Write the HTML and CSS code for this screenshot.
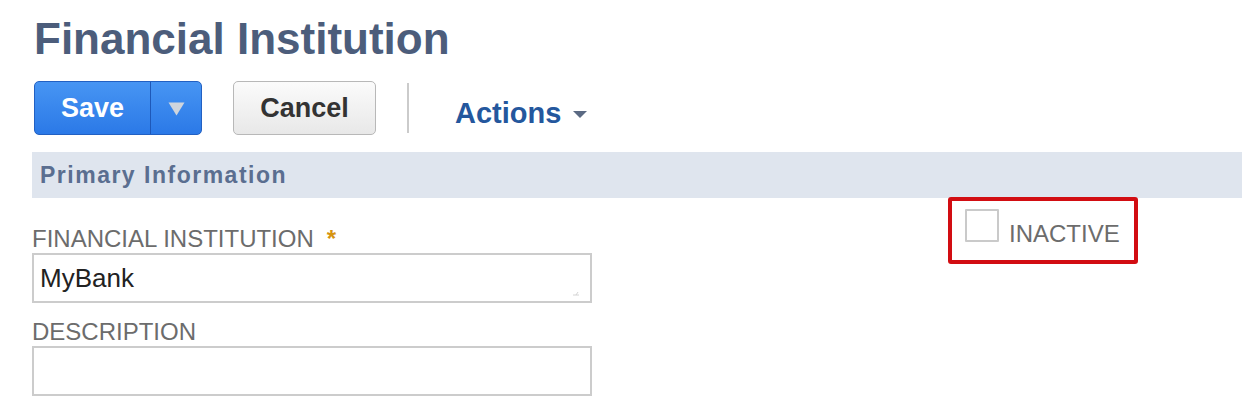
FILE: index.html
```html
<!DOCTYPE html>
<html lang="en">
<head>
<meta charset="utf-8">
<title>Financial Institution</title>
<link rel="stylesheet" href="styles.css">
</head>
<body>
<div class="page">
  <h1 class="title">Financial Institution</h1>
  <div class="toolbar">
    <div class="btn-split">
      <span class="btn-main">Save</span>
      <span class="btn-arrow"><svg width="17" height="14" viewBox="0 0 17 14"><path d="M0.5 0.5 H16.5 L8.5 13.5 Z" fill="#cfd5dd"/></svg></span>
    </div>
    <span class="btn-cancel">Cancel</span>
    <span class="tb-sep"></span>
    <span class="actions">Actions<svg class="actions-caret" width="14" height="7" viewBox="0 0 14 7"><path d="M0 0 H14 L7 7 Z" fill="#5b6a83"/></svg></span>
  </div>
  <div class="section-band">Primary Information</div>
  <div class="form-body">
    <div class="col-left">
      <div class="field">
        <div class="field-label">FINANCIAL INSTITUTION<span class="req">*</span></div>
        <div class="input">MyBank<svg class="grip" width="8" height="5" viewBox="0 0 8 5"><path d="M1 4 H7 M6 1 L4 4" stroke="#d4d4d4" stroke-width="1"/></svg></div>
      </div>
      <div class="field field-second">
        <div class="field-label">DESCRIPTION</div>
        <div class="input"></div>
      </div>
    </div>
    <div class="col-right">
      <div class="check-field">
        <span class="checkbox"></span>
        <span class="check-label">INACTIVE</span>
      </div>
    </div>
  </div>
</div>
</body>
</html>
```

FILE: styles.css
```css
html, body {
  margin: 0;
  padding: 0;
  background: #ffffff;
}

body {
  font-family: "Liberation Sans", Arial, Helvetica, sans-serif;
  overflow: hidden;
}

.page {
  padding-left: 32px;
}

.title {
  margin: 14px 0 0 0;
  padding-left: 2px;
  font-size: 44px;
  line-height: 50px;
  font-weight: bold;
  color: #4c5d7b;
}

.toolbar {
  display: flex;
  align-items: center;
  margin-top: 17px;
  height: 54px;
  padding-left: 2px;
}

.btn-split {
  display: flex;
  box-sizing: border-box;
  width: 168px;
  height: 54px;
  border: 1px solid #2260c2;
  border-radius: 5px;
  background: linear-gradient(#4795f3, #2b79e7);
  overflow: hidden;
}

.btn-main {
  width: 115px;
  display: flex;
  align-items: center;
  justify-content: center;
  font-size: 27px;
  font-weight: bold;
  color: #ffffff;
}

.btn-arrow {
  flex: 1;
  display: flex;
  align-items: center;
  justify-content: center;
  border-left: 1px solid #1e58b8;
  padding-top: 2px;
}

.btn-cancel {
  box-sizing: border-box;
  width: 143px;
  height: 54px;
  margin-left: 31px;
  display: flex;
  align-items: center;
  justify-content: center;
  border: 1px solid #b8b8b8;
  border-radius: 5px;
  background: linear-gradient(#fbfbfb, #e8e8e8);
  font-size: 27px;
  font-weight: bold;
  color: #333333;
}

.tb-sep {
  width: 2px;
  height: 50px;
  margin-left: 31px;
  background: #cbcbcb;
}

.actions {
  display: flex;
  align-items: center;
  margin-left: 46px;
  padding-top: 9px;
  font-size: 29px;
  line-height: 32px;
  font-weight: bold;
  color: #24579d;
}

.actions-caret {
  margin-left: 12px;
  margin-top: 3px;
}

.section-band {
  margin-top: 17px;
  height: 46px;
  line-height: 46px;
  padding-left: 8px;
  background: #dfe5ee;
  font-size: 23px;
  font-weight: bold;
  letter-spacing: 1.5px;
  color: #5a6e90;
}

.form-body {
  display: flex;
}

.col-left {
  width: 560px;
  padding-top: 27px;
}

.field-label {
  font-size: 24px;
  line-height: 27px;
  color: #6c6c6c;
  margin-bottom: 1px;
}

.req {
  color: #d69410;
  font-weight: bold;
  margin-left: 13px;
}

.field-second {
  margin-top: 15px;
}

.input {
  position: relative;
  box-sizing: border-box;
  height: 50px;
  border: 2px solid #cccccc;
  padding-left: 6px;
  font-size: 26px;
  line-height: 46px;
  color: #222222;
}

.grip {
  position: absolute;
  right: 10px;
  bottom: 5px;
}

.col-right {
  margin-left: 373px;
  padding-top: 11px;
}

.check-field {
  position: relative;
  display: flex;
  align-items: baseline;
}

.check-field::after {
  content: "";
  position: absolute;
  left: -17px;
  top: -12px;
  width: 190px;
  height: 67px;
  box-sizing: border-box;
  border: 4px solid #d20d12;
  border-radius: 3px;
}

.checkbox {
  box-sizing: border-box;
  width: 34px;
  height: 33px;
  border: 2px solid #cacaca;
  border-radius: 1px;
  background: #ffffff;
}

.check-label {
  margin-left: 10px;
  font-size: 24px;
  line-height: 27px;
  color: #6c6c6c;
}
```
